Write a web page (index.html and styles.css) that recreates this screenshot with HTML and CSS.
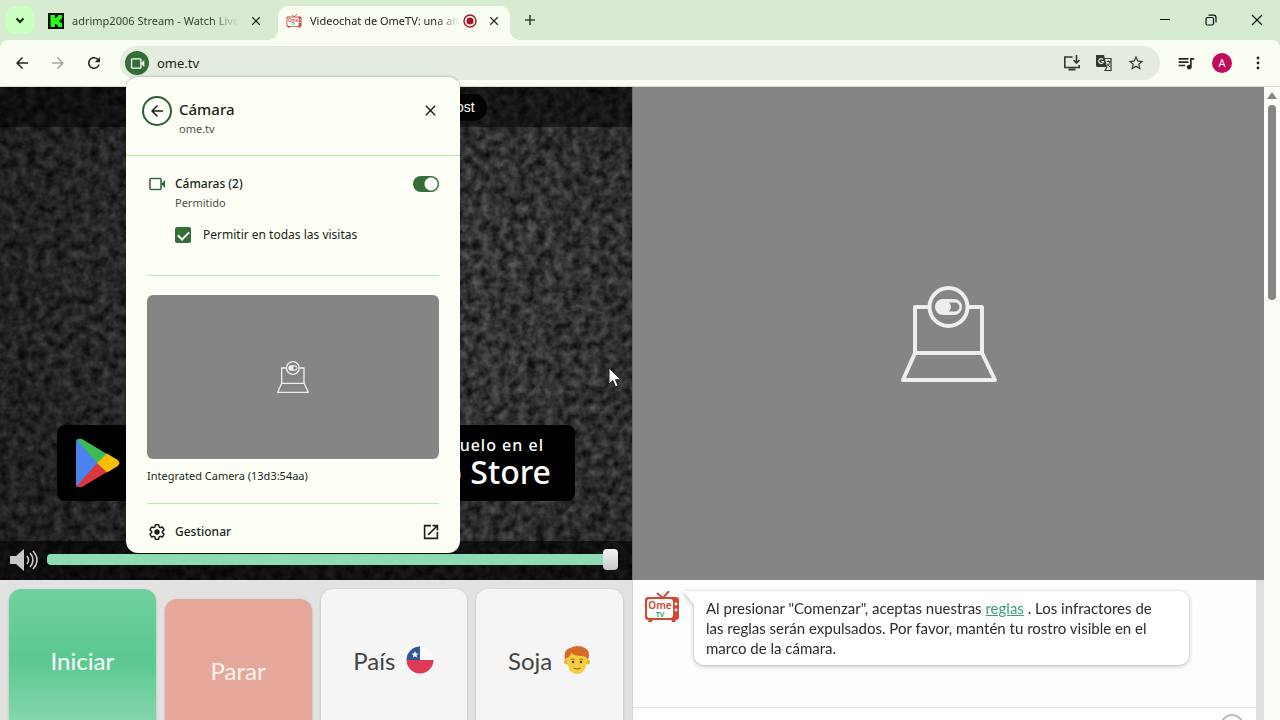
FILE: index.html
```html
<!DOCTYPE html>
<html lang="es">
<head>
  <meta charset="UTF-8" />
  <meta name="viewport" content="width=device-width, initial-scale=1" />
  <title>Videochat de OmeTV</title>
  <link rel="stylesheet" href="styles.css">
</head>
<body>
  <!-- Shared drawings -->
  <svg class="defs" width="0" height="0" aria-hidden="true">
    <symbol id="icon-close" viewBox="0 0 16 16">
      <path d="M3 3l10 10M13 3L3 13" fill="none" stroke="currentColor" stroke-width="1.5" />
    </symbol>
    <symbol id="icon-back" viewBox="0 0 24 24">
      <path d="M20 11H7.83l5.59-5.59L12 4l-8 8 8 8 1.41-1.41L7.83 13H20v-2z" fill="currentColor" />
    </symbol>
    <symbol id="icon-camera" viewBox="0 0 20 20">
      <rect x="3" y="4.500" width="11" height="11" rx="1" fill="none" stroke="currentColor" stroke-width="1.600" />
      <path d="M14 10l4-4v8z" fill="currentColor" />
    </symbol>
    <symbol id="icon-tv" viewBox="0 0 36 32">
      <path d="M13 2l6 5 6-7" fill="none" stroke="#c9503c" stroke-width="2" />
      <rect x="1" y="6" width="34" height="23" rx="3" fill="#cf4a35" />
      <path d="M5 28l-1 3h4l1-3zM27 28l1 3h4l-1-3z" fill="#cf4a35" />
      <rect x="3" y="8" width="26" height="19" rx="3" fill="#fff" />
      <circle cx="32" cy="13" r="1.400" fill="#fff" />
      <circle cx="32" cy="19" r="1.400" fill="#fff" />
      <text x="16" y="18" class="tv-ome">Ome</text>
      <text x="16" y="26" class="tv-tv">TV</text>
    </symbol>
    <symbol id="icon-webcam" viewBox="0 0 96 96">
      <g fill="none" stroke="#eee" stroke-width="4" stroke-linejoin="round">
        <path d="M28 21H14v46h67V21H67" />
        <path d="M14 67L2 94h92L81 67" />
        <circle cx="47.500" cy="21" r="19" />
      </g>
      <rect x="34" y="13" width="27" height="16" rx="8" fill="#eee" />
      <path d="M48 16.500h6a4.500 4.500 0 0 1 0 9h-6q4-4.500 0-9z" fill="#858586" />
    </symbol>
    <filter id="noise" x="0" y="0" width="100%" height="100%" color-interpolation-filters="sRGB">
      <feTurbulence type="fractalNoise" baseFrequency="0.11" numOctaves="3" seed="4" />
      <feColorMatrix values="0.42 0 0 0 -0.01  0.42 0 0 0 -0.01  0.42 0 0 0 -0.01  0 0 0 0 1" />
    </filter>
  </svg>

  <!-- Tabs -->
  <header class="tab-strip">
    <button class="tab-search" aria-label="Buscar pestañas">
      <svg width="12" height="12" viewBox="0 0 12 12"><path d="M2.500 4.500L6 8l3.500-3.500" fill="none" stroke="#14280f" stroke-width="2" /></svg>
    </button>
    <div class="tab">
      <svg class="favicon" viewBox="0 0 16 16">
        <rect width="16" height="16" fill="#040f02" />
        <path d="M2.500 2H7v3h1.500V3.500H10V2h4v4h-1.500v1.500H11v1h1.500V10H14v4h-4v-1.500H8.500V11H7v3H2.500z" fill="#2cf51c" />
      </svg>
      <span class="tab-title">adrimp2006 Stream - Watch Live</span>
      <button class="tab-close" aria-label="Cerrar"><svg width="12" height="12"><use href="#icon-close" /></svg></button>
    </div>
    <div class="tab active">
      <svg class="favicon"><use href="#icon-tv" /></svg>
      <span class="tab-title">Videochat de OmeTV: una alt</span>
      <svg class="recording" viewBox="0 0 14 14">
        <circle cx="7" cy="7" r="6" fill="none" stroke="#a91428" stroke-width="1.400" />
        <circle cx="7" cy="7" r="3.500" fill="#a91428" />
      </svg>
      <button class="tab-close" aria-label="Cerrar"><svg width="12" height="12"><use href="#icon-close" /></svg></button>
    </div>
    <button class="new-tab" aria-label="Nueva pestaña">
      <svg width="12" height="12" viewBox="0 0 12 12"><path d="M6 1v10M1 6h10" stroke="#33472e" stroke-width="1.600" /></svg>
    </button>
    <div class="window-controls">
      <button aria-label="Minimizar"><svg width="12" height="12" viewBox="0 0 12 12"><path d="M1 5.500h10" stroke="#111" /></svg></button>
      <button aria-label="Restaurar">
        <svg width="12" height="12" viewBox="0 0 12 12" fill="none" stroke="#111" stroke-width="1.200">
          <rect x="1" y="3.500" width="7.500" height="7.500" rx="1.500" />
          <path d="M3.500 1.200H8.500a2.500 2.500 0 0 1 2.500 2.500V8.500" />
        </svg>
      </button>
      <button aria-label="Cerrar ventana"><svg width="12" height="12" viewBox="0 0 12 12"><path d="M1 1l10 10M11 1L1 11" stroke="#111" stroke-width="1.200" /></svg></button>
    </div>
  </header>

  <!-- Toolbar -->
  <nav class="toolbar">
    <button class="tool" aria-label="Atrás"><svg width="18" height="18"><use href="#icon-back" /></svg></button>
    <button class="tool forward" aria-label="Adelante"><svg width="18" height="18"><use href="#icon-back" /></svg></button>
    <button class="tool" aria-label="Recargar">
      <svg width="18" height="18" viewBox="0 0 24 24"><path d="M17.650 6.350A7.958 7.958 0 0 0 12 4c-4.420 0-7.990 3.580-7.990 8s3.570 8 7.990 8c3.730 0 6.840-2.550 7.730-6h-2.080A5.990 5.990 0 0 1 12 18c-3.310 0-6-2.690-6-6s2.690-6 6-6c1.660 0 3.140.69 4.220 1.780L13 11h7V4l-2.350 2.350z" fill="currentColor" /></svg>
    </button>

    <div class="omnibox">
      <button class="camera-chip" aria-label="Cámara en uso"><svg width="17" height="17"><use href="#icon-camera" /></svg></button>
      <input class="address" type="text" value="ome.tv" aria-label="Dirección">
      <button class="omni-btn" aria-label="Instalar">
        <svg width="18" height="18" viewBox="0 0 18 18" fill="none" stroke="currentColor" stroke-width="1.600">
          <path d="M9.500 3H1.800v10.500h14.400V11" />
          <path d="M5.500 15.500h7" stroke-width="2" />
          <path d="M13.500 1v8M10.500 6l3 3 3-3" />
        </svg>
      </button>
      <button class="omni-btn" aria-label="Traducir">
        <svg width="18" height="18" viewBox="0 0 18 18">
          <path d="M1 1h8l3 12H2.500A1.500 1.500 0 0 1 1 11.500z" fill="currentColor" />
          <path d="M9.500 4.500h6.500V16.500H10l2-3.500" fill="none" stroke="currentColor" stroke-width="1.200" />
          <path d="M8 5.500a2.400 2.400 0 1 0 .5 2H6.200" fill="none" stroke="#e5ecdf" stroke-width="1.200" />
          <path d="M11.500 7.500h4M13.500 6.500v1M15 8q-1 3-3 4.500M12 9.500q1.500 2.500 3 3.500" fill="none" stroke="currentColor" />
        </svg>
      </button>
      <button class="omni-btn" aria-label="Favoritos">
        <svg width="18" height="18" viewBox="0 0 24 24"><path d="M22 9.240l-7.190-.62L12 2 9.190 8.630 2 9.240l5.460 4.730L5.820 21 12 17.270 18.180 21l-1.630-7.030L22 9.240zM12 15.400l-3.760 2.270 1-4.280-3.320-2.880 4.380-.38L12 6.100l1.710 4.040 4.380.38-3.320 2.880 1 4.280L12 15.400z" fill="currentColor" /></svg>
      </button>

      <!-- Camera permission popup -->
      <section class="popup">
        <div class="popup-header">
          <button class="popup-back" aria-label="Volver"><svg width="18" height="18"><use href="#icon-back" /></svg></button>
          <div class="popup-heading">
            <h2>Cámara</h2>
            <p>ome.tv</p>
          </div>
          <button class="popup-close" aria-label="Cerrar"><svg width="15" height="15"><use href="#icon-close" /></svg></button>
        </div>
        <div class="popup-body">
          <div class="permission">
            <svg class="permission-icon" width="20" height="20"><use href="#icon-camera" /></svg>
            <label class="permission-name" for="camera-toggle">
              <strong>Cámaras (2)</strong>
              <span>Permitido</span>
            </label>
            <input class="toggle" id="camera-toggle" type="checkbox" checked>
          </div>
          <div class="remember">
            <input class="check" id="remember" type="checkbox" checked>
            <label for="remember">Permitir en todas las visitas</label>
          </div>
          <hr>
          <div class="preview"><svg width="32" height="32"><use href="#icon-webcam" /></svg></div>
          <p class="camera-name">Integrated Camera (13d3:54aa)</p>
          <hr>
          <a class="manage" href="#">
            <svg width="20" height="18" viewBox="0 0 24 24">
              <path d="M19.140 12.940c.04-.3.06-.61.06-.94 0-.32-.02-.64-.07-.94l2.030-1.580c.18-.14.23-.41.12-.61l-1.920-3.320c-.12-.22-.37-.29-.59-.22l-2.390.96c-.5-.38-1.030-.7-1.620-.94l-.36-2.540c-.04-.24-.24-.41-.48-.41h-3.840c-.24 0-.43.17-.47.41l-.36 2.540c-.59.24-1.130.57-1.620.94l-2.390-.96c-.22-.08-.47 0-.59.22L2.740 8.870c-.12.21-.08.47.12.61l2.030 1.580c-.05.3-.09.63-.09.94s.02.64.07.94l-2.030 1.580c-.18.14-.23.41-.12.61l1.920 3.320c.12.22.37.29.59.22l2.390-.96c.5.38 1.030.7 1.620.94l.36 2.540c.05.24.24.41.48.41h3.840c.24 0 .44-.17.47-.41l.36-2.540c.59-.24 1.130-.56 1.620-.94l2.390.96c.22.08.47 0 .59-.22l1.920-3.320c.12-.22.07-.47-.12-.61l-2.010-1.580z" fill="none" stroke="currentColor" stroke-width="1.900" />
              <circle cx="12" cy="12" r="3.600" fill="currentColor" />
            </svg>
            <span>Gestionar</span>
            <svg width="16" height="16" viewBox="2 2 20 20"><path d="M19 19H5V5h7V3H3v18h18v-9h-2v7zM14 3v2h3.590l-9.830 9.830 1.410 1.410L19 6.410V10h2V3z" fill="currentColor" /></svg>
          </a>
        </div>
      </section>
    </div>

    <button class="tool" aria-label="Control multimedia">
      <svg width="18" height="18" viewBox="1 1 22 22"><path d="M15 6H3v2h12V6zm0 4H3v2h12v-2zM3 16h8v-2H3v2zM17 6v8.180c-.31-.11-.65-.18-1-.18-1.660 0-3 1.340-3 3s1.340 3 3 3 3-1.340 3-3V8h3V6h-5z" fill="currentColor" /></svg>
    </button>
    <button class="tool" aria-label="Perfil"><span class="avatar">A</span></button>
    <button class="tool" aria-label="Menú">
      <svg width="18" height="18" viewBox="0 0 18 18" fill="currentColor"><circle cx="9" cy="4" r="1.400" /><circle cx="9" cy="9" r="1.400" /><circle cx="9" cy="14" r="1.400" /></svg>
    </button>
  </nav>

  <!-- Page -->
  <div class="viewport">
    <main class="chat-app">
      <section class="remote">
        <svg class="static" aria-hidden="true"><rect width="100%" height="100%" filter="url(#noise)" /></svg>
        <div class="remote-top"><span class="pill">Post</span></div>
        <div class="stores">
          <a class="badge" href="#" aria-label="Google Play">
            <svg width="44" height="50" viewBox="0 0 44 50">
              <path d="M0 4Q0 1 2 1L22 25 2 49q-2 0-2-3z" fill="#4a83f0" />
              <path d="M1 2q2-2 5-1l25 15-9 10z" fill="#3cba54" />
              <path d="M1 48q2 2 5 1l25-15-9-10z" fill="#dc373b" />
              <path d="M31 15.500l10 6q5 3.500 0 7l-10 6L21 25z" fill="#f6be0a" />
            </svg>
          </a>
          <a class="badge apple" href="#"><small>Consíguelo en el</small><span>App Store</span></a>
        </div>
        <div class="volume">
          <svg width="30" height="24" viewBox="0 0 30 24">
            <path d="M1 8h6l8-7v22l-8-7H1z" fill="#c8c8c8" />
            <path d="M18 8q3 4 0 8M21 5q6 7 0 14M24 3q8 9 0 18" fill="none" stroke="#c8c8c8" stroke-width="1.600" />
          </svg>
          <input type="range" min="0" max="100" value="100" aria-label="Volumen">
        </div>
      </section>

      <section class="local">
        <svg width="96" height="96"><use href="#icon-webcam" /></svg>
      </section>

      <section class="controls">
        <button class="big start">Iniciar</button>
        <button class="big stop">Parar</button>
        <button class="big">País
          <svg width="28" height="28" viewBox="0 0 28 28">
            <circle cx="14" cy="14" r="13.500" fill="#fafafa" />
            <path d="M.5 14a13.500 13.500 0 0 0 27 0z" fill="#dc3a58" />
            <path d="M14 .5A13.500 13.500 0 0 0 .5 14H14z" fill="#31559a" />
            <path d="M9 5l1 2.600h2.700l-2.200 1.600.9 2.600L9 10.200l-2.400 1.600.9-2.600-2.200-1.600H8z" fill="#fff" />
          </svg>
        </button>
        <button class="big">Soja
          <svg width="28" height="28" viewBox="0 0 28 28">
            <circle cx="3.500" cy="16" r="2.500" fill="#f0b428" /><circle cx="24.500" cy="16" r="2.500" fill="#f0b428" />
            <path d="M4 10q0 18 10 18t10-18l-4-3H8z" fill="#f8ce3e" />
            <path d="M2 14Q0 4 7 2q8-4 15 0 6 3 3 12l-2-3-4-1q-8 0-11-3-1 4-4 5z" fill="#d9682b" />
            <circle cx="10" cy="16" r="1.300" fill="#5c3b1c" /><circle cx="18" cy="16" r="1.300" fill="#5c3b1c" />
            <path d="M8 13.500q2-1 3.500 0M16.500 13.500q2-1 3.500 0M10.500 22q3.500 2.500 7 0" fill="none" stroke="#8a5a1d" />
          </svg>
        </button>
      </section>

      <section class="chat">
        <div class="log">
          <svg class="chat-logo" width="36" height="32"><use href="#icon-tv" /></svg>
          <p class="bubble">Al presionar "Comenzar", aceptas nuestras <a href="#">reglas</a> . Los infractores de las reglas serán expulsados. Por favor, mantén tu rostro visible en el marco de la cámara.</p>
        </div>
        <div class="compose"><button class="emoji" aria-label="Emoji"></button></div>
      </section>
    </main>
    <div class="scrollbar"><span class="scroll-up"></span><span class="scroll-thumb"></span></div>
  </div>

  <svg class="pointer" width="14" height="21" viewBox="0 0 14 21"><path d="M1 1v16l3.800-3.500L7.500 20l2.700-1.200-2.700-6H13z" fill="#fff" stroke="#222" /></svg>
</body>
</html>
```

FILE: styles.css
```css
* {
  box-sizing: border-box;
}

body {
  margin: 0;
  height: 100vh;
  display: flex;
  flex-direction: column;
  overflow: hidden;
  background: #d6ebcf;
  color: #1a1f18;
  font-family: "Noto Sans", sans-serif;
  font-size: 12px;
}

h2, p {
  margin: 0;
}

button {
  display: flex;
  align-items: center;
  justify-content: center;
  padding: 0;
  border: none;
  background: none;
  color: inherit;
  font-family: inherit;
  cursor: pointer;
}

.defs {
  position: absolute;
}

.tv-ome, .tv-tv {
  font-family: "Noto Sans", sans-serif;
  font-weight: 600;
  text-anchor: middle;
}

.tv-ome {
  font-size: 10px;
  fill: #d0452f;
}

.tv-tv {
  font-size: 7px;
  font-weight: bold;
  fill: #2fae76;
}

/* Tab strip */
.tab-strip {
  display: flex;
  align-items: center;
  height: 40px;
  padding-left: 6px;
}

.tab-search {
  width: 28px;
  height: 28px;
  border-radius: 9px;
  background: #c9ffc0;
}

.tab {
  display: flex;
  align-items: center;
  width: 232px;
  height: 34px;
  margin-top: 6px;
  padding: 0 8px 5px;
  position: relative;
}

.tab-search + .tab {
  width: 244px;
  padding-left: 14px;
  padding-right: 14px;
}

.tab.active {
  background: #f9fdf2;
  border-radius: 10px 10px 0 0;
}

.tab.active::before, .tab.active::after {
  content: "";
  position: absolute;
  bottom: 0;
  width: 10px;
  height: 10px;
}

.tab.active::before {
  left: -10px;
  background: radial-gradient(circle at 0 0, transparent 10px, #f9fdf2 10px);
}

.tab.active::after {
  right: -10px;
  background: radial-gradient(circle at 100% 0, transparent 10px, #f9fdf2 10px);
}

.favicon {
  width: 16px;
  height: 16px;
  flex: none;
}

.tab-title {
  flex: 1;
  margin-left: 8px;
  margin-right: 10px;
  overflow: hidden;
  white-space: nowrap;
  color: #34422f;
  font-size: 11px;
  mask-image: linear-gradient(to right, #000 84%, transparent);
}

.active .tab-title {
  margin-right: 4px;
  color: #20261d;
}

.recording {
  width: 14px;
  height: 14px;
  margin-right: 9px;
}

.tab-close {
  width: 16px;
  height: 16px;
}

.new-tab {
  width: 28px;
  height: 28px;
  margin-left: 6px;
}

.window-controls {
  display: flex;
  margin-left: auto;
}

.window-controls button {
  width: 46px;
  height: 40px;
}

/* Toolbar */
.toolbar {
  display: flex;
  align-items: center;
  gap: 8px;
  height: 47px;
  padding: 0 8px;
  background: #f9fdf2;
  border-bottom: 1px solid #d5dad0;
  border-radius: 8px 8px 0 0;
}

.tool {
  width: 28px;
  height: 28px;
  flex: none;
  color: #20291d;
}

.forward {
  color: #a0a69c;
}

.forward svg {
  transform: scaleX(-1);
}

.omnibox {
  flex: 1;
  display: flex;
  align-items: center;
  gap: 8px;
  height: 34px;
  margin: 0 4px;
  padding: 0 12px 0 5px;
  border-radius: 17px;
  background: #e4ecdf;
  position: relative;
}

.camera-chip {
  width: 24px;
  height: 24px;
  border-radius: 50%;
  background: #356d36;
  color: #fff;
}

.address {
  flex: 1;
  min-width: 0;
  padding: 0;
  border: none;
  outline: none;
  background: none;
  color: #1a1f18;
  font-family: inherit;
  font-size: 13px;
}

.omni-btn {
  width: 24px;
  height: 24px;
  color: #333b30;
}

.avatar {
  width: 20px;
  height: 20px;
  border-radius: 50%;
  background: #c2095d;
  color: #fff;
  font-size: 11px;
  line-height: 20px;
}

/* Popup */
.popup {
  position: absolute;
  top: 31px;
  left: 6px;
  z-index: 5;
  width: 334px;
  border-radius: 12px;
  background: #fdfff7;
  box-shadow: 0 0 3px rgba(0, 0, 0, 0.35);
}

.popup-header {
  display: flex;
  align-items: flex-start;
  gap: 7px;
  padding: 19px 16px 16px;
  border-bottom: 1px solid #b2efa6;
}

.popup-back {
  width: 30px;
  height: 30px;
  border: 2px solid #2c5f2f;
  border-radius: 50%;
}

.popup-heading {
  flex: 1;
  padding-top: 3px;
  line-height: 20px;
}

.popup-heading h2 {
  font-size: 15px;
  font-weight: 500;
}

.popup-heading p {
  color: #4a5147;
  font-size: 11px;
}

.popup-close {
  width: 28px;
  height: 28px;
}

.popup-body {
  padding: 18px 21px 11px;
}

.permission {
  display: flex;
  align-items: flex-start;
  gap: 8px;
}

.permission-icon {
  color: #356d36;
}

.permission-name {
  flex: 1;
  display: flex;
  flex-direction: column;
}

.permission-name strong {
  font-weight: 500;
  line-height: 20px;
}

.permission-name span {
  color: #4a5147;
  font-size: 11px;
  line-height: 18px;
}

.toggle {
  appearance: none;
  width: 26px;
  height: 16px;
  margin: 2px 0 0;
  border-radius: 8px;
  background: radial-gradient(circle at 18px 8px, #fff 6px, #356d36 7px);
}

.remember {
  display: flex;
  align-items: center;
  gap: 12px;
  margin-top: 13px;
  padding-left: 28px;
  line-height: 20px;
}

.check {
  appearance: none;
  display: grid;
  place-items: center;
  width: 16px;
  height: 16px;
  margin: 0;
  border-radius: 2px;
  background: #356d36;
}

.check::before {
  content: "";
  width: 9px;
  height: 5px;
  border-left: 2px solid #fff;
  border-bottom: 2px solid #fff;
  transform: translateY(-1px) rotate(-45deg);
}

.popup hr {
  margin: 30px 0 19px;
  border: none;
  border-top: 1px solid #b2efa6;
}

.popup .camera-name + hr {
  margin: 18px 0;
}

.preview {
  display: flex;
  align-items: center;
  justify-content: center;
  aspect-ratio: 292 / 164;
  border-radius: 6px;
  background: #858586;
}

.camera-name {
  margin-top: 8px;
  font-size: 11px;
  line-height: 18px;
}

.manage {
  display: flex;
  align-items: center;
  gap: 8px;
  color: inherit;
  font-weight: 500;
  line-height: 20px;
  text-decoration: none;
}

.manage span {
  flex: 1;
}

/* Page */
.viewport {
  flex: 1;
  min-height: 0;
  display: flex;
}

.chat-app {
  flex: 1;
  display: grid;
  grid-template-columns: 1fr 1fr;
  grid-template-rows: 1fr 140px;
  overflow: hidden;
  font-family: Lato, sans-serif;
}

.remote {
  display: flex;
  flex-direction: column;
  position: relative;
  background: #222;
}

.static {
  position: absolute;
  width: 100%;
  height: 100%;
}

.remote::before {
  content: "";
  position: absolute;
  inset: 0;
  z-index: 1;
  background: radial-gradient(circle at 70% 45%, transparent 20%, rgba(0, 0, 0, 0.35) 85%);
}

.remote-top, .stores, .volume {
  position: relative;
  z-index: 2;
  display: flex;
}

.remote-top {
  justify-content: center;
  align-items: center;
  height: 40px;
  background: rgba(0, 0, 0, 0.5);
}

.pill {
  width: 54%;
  padding: 0 12px;
  border-radius: 14px;
  background: #030303;
  color: #fff;
  font-family: "Liberation Sans", sans-serif;
  font-size: 14px;
  line-height: 27px;
  text-align: right;
}

.stores {
  flex: 1;
  align-items: flex-end;
  gap: 14px;
  padding: 0 57px 40px;
}

.badge {
  flex: 1;
  display: flex;
  align-items: center;
  height: 76px;
  padding: 0 19px;
  border-radius: 8px;
  background: #000;
  color: #fff;
  text-decoration: none;
}

.apple {
  flex-direction: column;
  align-items: flex-end;
  justify-content: center;
  padding: 0 24px;
  font-family: "Noto Sans", sans-serif;
}

.apple small {
  padding-right: 7px;
  font-size: 16px;
  font-weight: 500;
  line-height: 18px;
  letter-spacing: 1px;
}

.apple span {
  font-size: 32px;
  font-weight: 500;
  line-height: 36px;
}

.volume {
  align-items: center;
  gap: 8px;
  height: 39px;
  padding: 0 14px 2px 9px;
  background: rgba(0, 0, 0, 0.6);
}

.volume input {
  appearance: none;
  flex: 1;
  min-width: 0;
  height: 11px;
  margin: 0;
  border-radius: 4px;
  background: #8edcb3;
}

.volume input::-webkit-slider-thumb {
  appearance: none;
  width: 15px;
  height: 21px;
  border-radius: 4px;
  background: linear-gradient(#f4f4f4, #c9c9c9);
}

.local {
  display: flex;
  align-items: center;
  justify-content: center;
  border-left: 1px solid #707070;
  background: #858586;
}

.controls {
  display: grid;
  grid-template-columns: repeat(4, 1fr);
  align-items: start;
  gap: 9px;
  padding: 9px;
  overflow: hidden;
  background: #e2e2e2;
}

.big {
  gap: 11px;
  height: 142px;
  border-radius: 12px;
  background: #f5f5f5;
  box-shadow: 0 1px 3px rgba(0, 0, 0, 0.2);
  color: #444;
  font-size: 24px;
}

.start {
  background: linear-gradient(#70d09f, #5bc890 50%, #86d7ae 95%);
  color: #fff;
}

.stop {
  margin-top: 10px;
  background: #e6a89b;
  color: #fff3f0;
}

.chat {
  display: flex;
  flex-direction: column;
  border-left: 1px solid #d8d8d8;
  border-right: 8px solid #dfdfdf;
  background: #fff;
}

.log {
  flex: 1;
  display: flex;
  align-items: flex-start;
  gap: 14px;
  padding: 11px 67px 0 11px;
  background: #fdfdfd;
  border-bottom: 1px solid #e2e2e2;
}

.chat-logo {
  flex: none;
}

.bubble {
  flex: 1;
  position: relative;
  padding: 7px 20px 7px 12px;
  border-radius: 0 10px 10px 10px;
  background: #fff;
  filter: drop-shadow(0 1px 2px rgba(0, 0, 0, 0.3));
  color: #2c2c2c;
  font-size: 15px;
  line-height: 20px;
}

.bubble::before {
  content: "";
  position: absolute;
  top: 0;
  left: -11px;
  width: 12px;
  height: 15px;
  background: #fff;
  clip-path: polygon(0 0, 100% 0, 100% 100%);
}

.bubble a {
  color: #3aa271;
}

.compose {
  display: flex;
  justify-content: flex-end;
  height: 12px;
  padding: 6px 12px 0 0;
  overflow: hidden;
}

.emoji {
  width: 24px;
  height: 24px;
  border: 2px solid #bbb;
  border-radius: 50%;
}

.scrollbar {
  display: flex;
  flex-direction: column;
  align-items: center;
  gap: 6px;
  width: 16px;
  padding-top: 5px;
  background: #fbfdf6;
}

.scroll-up {
  border: 5px solid transparent;
  border-top: none;
  border-bottom: 7px solid #868686;
}

.scroll-thumb {
  width: 8px;
  height: 31%;
  border-radius: 4px;
  background: #868686;
}

.pointer {
  position: absolute;
  top: 367px;
  left: 608px;
  z-index: 9;
}
```
